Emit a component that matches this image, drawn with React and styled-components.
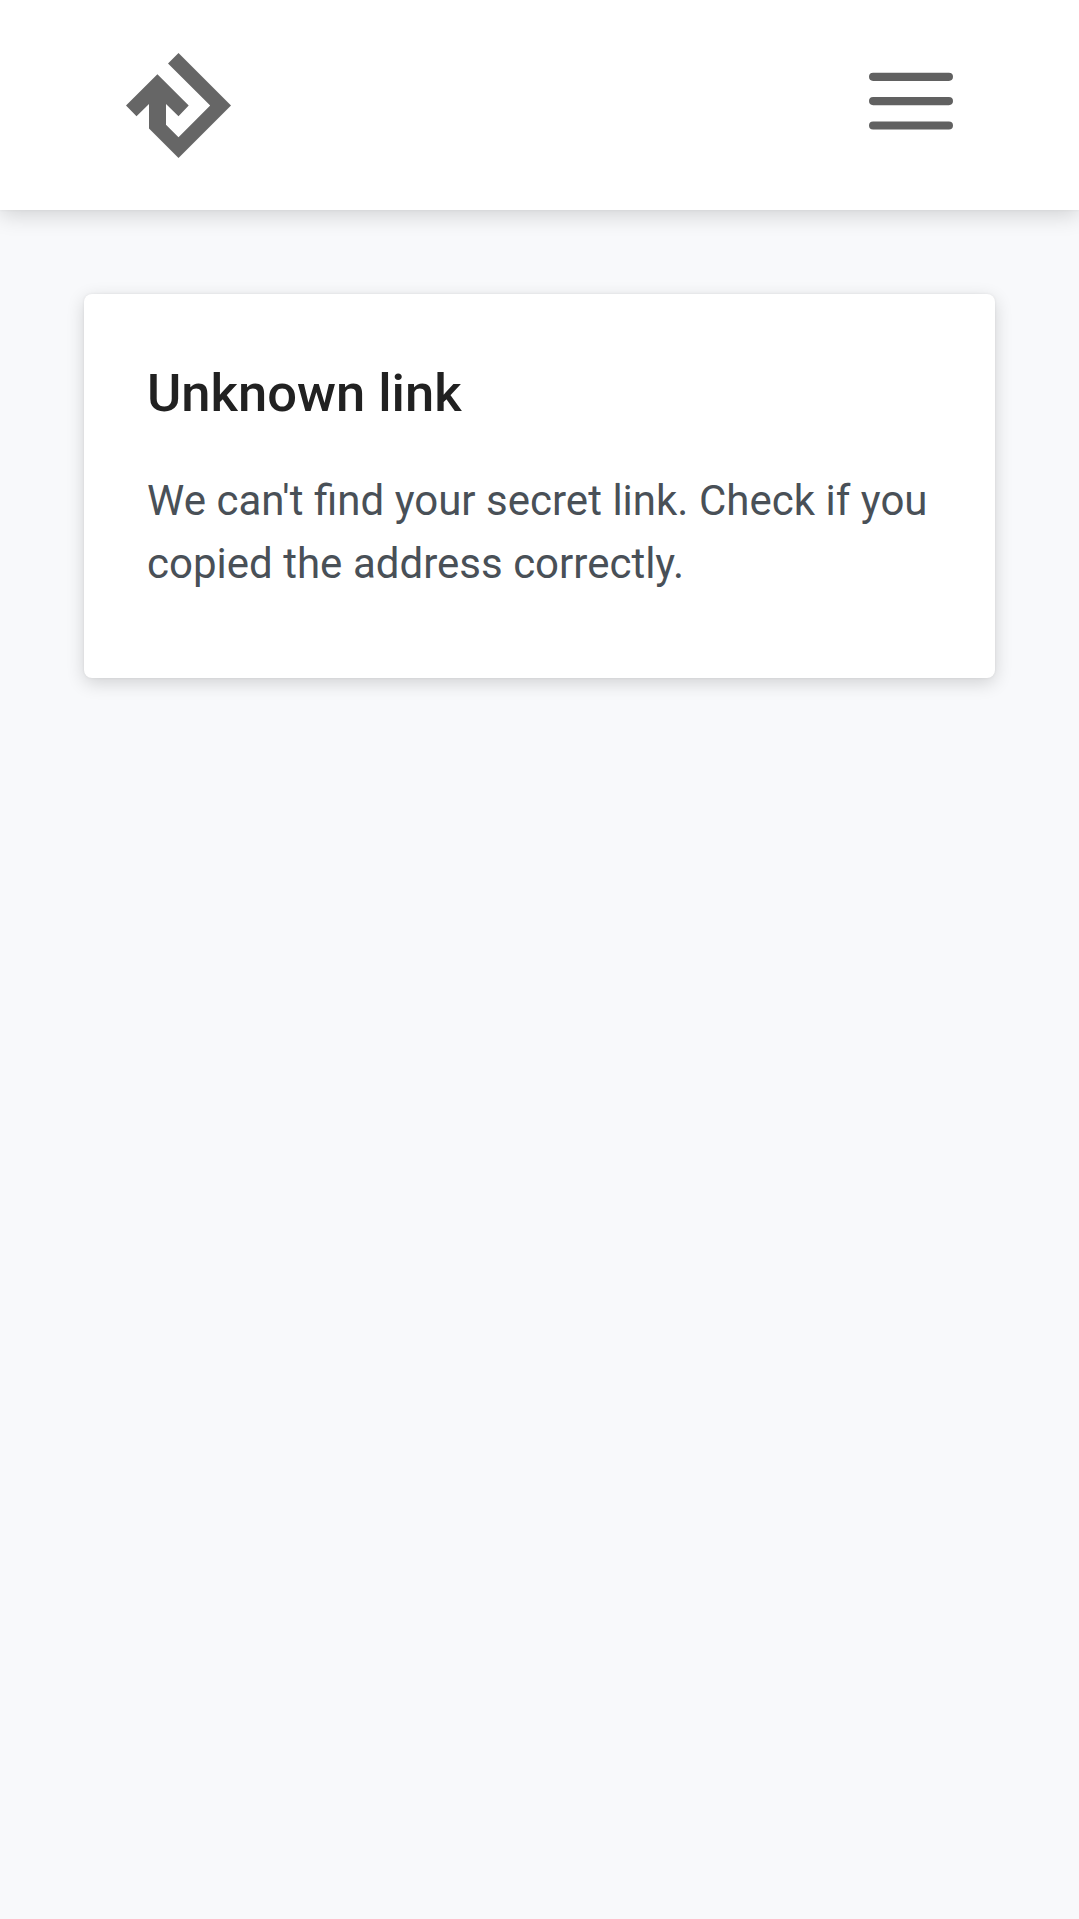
import React from "react";
import styled, { createGlobalStyle } from "styled-components";

const GlobalStyle = createGlobalStyle`
  *, *::before, *::after { box-sizing: border-box; }
  body {
    margin: 0;
    background: #f8f9fb;
    font-family: Roboto, "Liberation Sans", sans-serif;
  }
`;

const Page = styled.div`
  min-height: 1919px;
  background: #f8f9fb;
`;

const Header = styled.header`
  display: flex;
  justify-content: space-between;
  align-items: flex-start;
  height: 210px;
  padding: 52.5px 126px;
  background: #fff;
  box-shadow: 0 5px 21px rgba(0, 0, 0, 0.16), 0 0 3px rgba(0, 0, 0, 0.06);
`;

const Logo = styled.svg`
  display: block;
  width: 105px;
  height: 105px;
  fill: #666;
`;

const MenuButton = styled.button`
  display: block;
  margin: 19.5px 0 0;
  padding: 0;
  border: 0;
  background: none;
`;

const MenuIcon = styled.svg`
  display: block;
  width: 84px;
  height: 58px;
  fill: none;
  stroke: #616161;
  stroke-width: 8.2;
  stroke-linecap: round;
`;

const Main = styled.main`
  padding: 84px;
`;

const Card = styled.section`
  height: 384px;
  padding: 63px;
  border-radius: 8px;
  background: #fff;
  box-shadow: 0 5px 18px rgba(0, 0, 0, 0.16), 0 0 3px rgba(0, 0, 0, 0.07);
`;

const Title = styled.h1`
  margin: 0 0 40px;
  color: #212121;
  font-size: 52.5px;
  font-weight: 500;
  line-height: 72px;
`;

const Message = styled.p`
  margin: 0;
  color: #495057;
  font-size: 42px;
  line-height: 63px;
  word-spacing: 0.12px;
`;

export default function App() {
  return (
    <Page>
      <GlobalStyle />
      <Header>
        <Logo viewBox="0 0 105 105" aria-label="Home">
          <path d="M52.5 0 105 52.5 52.5 105 23 75.5V51L10.5 63.2 0 52.5 31.4 21.2 62.7 52.5 52.5 63.2 40 51V71.8L52.5 84.2 84.2 52.5 42 10.6Z" />
        </Logo>
        <MenuButton aria-label="Menu">
          <MenuIcon viewBox="0 0 84 58">
            <path d="M4.1 4.8H79.9M4.1 29.1H79.9M4.1 53.5H79.9" />
          </MenuIcon>
        </MenuButton>
      </Header>
      <Main>
        <Card>
          <Title>Unknown link</Title>
          <Message>
            We can't find your secret link. Check if you copied the address correctly.
          </Message>
        </Card>
      </Main>
    </Page>
  );
}
